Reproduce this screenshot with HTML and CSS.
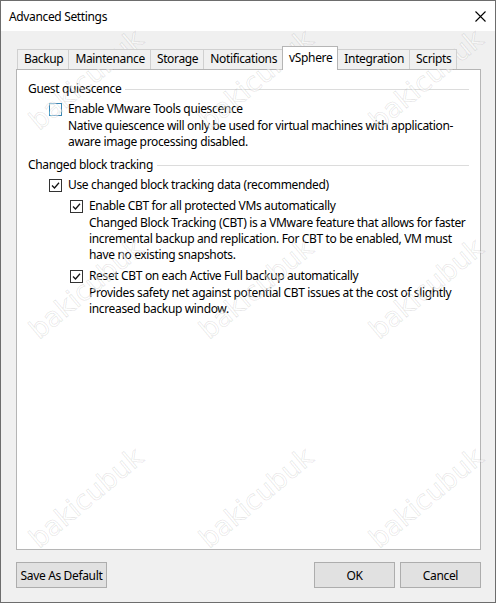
FILE: index.html
```html
<!DOCTYPE html>
<html lang="en">
<head>
  <meta charset="UTF-8" />
  <title>Advanced Settings</title>
  <link rel="stylesheet" href="styles.css">
</head>
<body>

  <div class="window">
    <!-- Title bar -->
    <div class="titlebar">
      <span class="title">Advanced Settings</span>
      <svg class="close" width="11" height="11" viewBox="0 0 11 11">
        <path d="M0.5 0.5L10.5 10.5M10.5 0.5L0.5 10.5" stroke="#000" stroke-width="1.1" fill="none" />
      </svg>
    </div>

    <div class="body">
      <!-- Tabs -->
      <div class="tabs">
        <div class="tab">Backup</div>
        <div class="tab">Maintenance</div>
        <div class="tab">Storage</div>
        <div class="tab">Notifications</div>
        <div class="tab active">vSphere</div>
        <div class="tab">Integration</div>
        <div class="tab">Scripts</div>
      </div>

      <!-- vSphere page -->
      <div class="panel">
        <div class="group">
          <div class="group-title">Guest quiescence</div>
          <div class="option">
            <span class="box box-focus"></span>
            <div>
              <div class="option-label">Enable VMware Tools quiescence</div>
              <div class="option-desc">Native quiescence will only be used for virtual machines with application-<br>aware image processing disabled.</div>
            </div>
          </div>
        </div>

        <div class="group">
          <div class="group-title">Changed block tracking</div>
          <div class="option">
            <span class="box"><svg viewBox="0 0 11 11"><path d="M2 5.5L4.5 8L9 2.8" /></svg></span>
            <div>
              <div class="option-label">Use changed block tracking data (recommended)</div>
            </div>
          </div>
          <div class="nested">
            <div class="option">
              <span class="box"><svg viewBox="0 0 11 11"><path d="M2 5.5L4.5 8L9 2.8" /></svg></span>
              <div>
                <div class="option-label">Enable CBT for all protected VMs automatically</div>
                <div class="option-desc">Changed Block Tracking (CBT) is a VMware feature that allows for faster<br>incremental backup and replication. For CBT to be enabled, VM must<br>have no existing snapshots.</div>
              </div>
            </div>
            <div class="option">
              <span class="box"><svg viewBox="0 0 11 11"><path d="M2 5.5L4.5 8L9 2.8" /></svg></span>
              <div>
                <div class="option-label">Reset CBT on each Active Full backup automatically</div>
                <div class="option-desc">Provides safety net against potential CBT issues at the cost of slightly<br>increased backup window.</div>
              </div>
            </div>
          </div>
        </div>
      </div>

      <!-- Buttons -->
      <div class="footer">
        <button class="btn btn-wide">Save As Default</button>
        <button class="btn">OK</button>
        <button class="btn">Cancel</button>
      </div>
    </div>

    <!-- Watermark -->
    <div class="watermarks" aria-hidden="true">
      <span>bakicubuk</span><span>bakicubuk</span><span>bakicubuk</span>
      <span>bakicubuk</span><span>bakicubuk</span><span>bakicubuk</span>
      <span>bakicubuk</span><span>bakicubuk</span><span>bakicubuk</span>
    </div>
  </div>

</body>
</html>
```

FILE: styles.css
```css
/* Global */
* {
  box-sizing: border-box;
}

body {
  margin: 0;
  font-family: "Noto Sans", "Segoe UI", sans-serif;
  font-size: 12px;
  letter-spacing: -0.35px;
  color: #000;
  background: #f0f0f0;
}

/* Window frame */
.window {
  position: relative;
  width: 496px;
  height: 603px;
  border: 1px solid #6d6d6d;
  background: #f0f0f0;
  display: flex;
  flex-direction: column;
  overflow: hidden;
}

.titlebar {
  height: 30px;
  background: #fff;
  display: flex;
  align-items: center;
  justify-content: space-between;
  padding: 0 9px 0 8px;
}

.body {
  flex: 1;
  display: flex;
  flex-direction: column;
  padding: 15px 14px 14px 15px;
}

/* Tabs */
.tabs {
  display: flex;
  align-items: flex-end;
  height: 23px;
  padding-left: 2px;
  position: relative;
  z-index: 1;
}

.tab {
  height: 20px;
  line-height: 17px;
  padding: 0 5px 0 6px;
  margin-left: -1px;
  border: 1px solid #d0d0d0;
  border-bottom: none;
  background: #f0f0f0;
  white-space: nowrap;
}

.tab.active {
  height: 24px;
  line-height: 21px;
  margin-bottom: -1px;
  background: #fff;
  border-color: #b5b5b5;
  position: relative;
  z-index: 1;
}

/* Tab page */
.panel {
  flex: 1;
  background: #fff;
  border: 1px solid #b5b5b5;
  padding: 11px 11px 0 11px;
  line-height: 16px;
}

.group + .group {
  margin-top: 7px;
}

.group-title {
  display: flex;
  align-items: center;
  white-space: nowrap;
}

.group-title::after {
  content: "";
  flex: 1;
  height: 1px;
  margin-left: 4px;
  background: #dcdcdc;
}

.option {
  display: grid;
  grid-template-columns: 13px 1fr;
  column-gap: 6px;
  margin: 4px 0 0 21px;
  white-space: nowrap;
}

.nested {
  margin-left: 21px;
}

.nested .option {
  margin-top: 5px;
}

.option-desc {
  margin-top: 1px;
}

.box {
  width: 13px;
  height: 13px;
  margin-top: 2px;
  border: 1px solid #333;
  background: #fff;
  display: flex;
}

.box svg {
  width: 11px;
  height: 11px;
  fill: none;
  stroke: #111;
  stroke-width: 1.3;
}

.box-focus {
  border-color: #3a88b5;
}

/* Buttons */
.footer {
  display: flex;
  gap: 5px;
  height: 26px;
  margin-top: 12px;
}

.btn {
  width: 81px;
  height: 26px;
  padding: 0;
  border: 1px solid #adadad;
  background: #e1e1e1;
  font-family: inherit;
  font-size: 12px;
  letter-spacing: inherit;
  color: #000;
}

.btn-wide {
  width: 91px;
  margin-right: auto;
}

/* Watermark overlay */
.watermarks {
  position: absolute;
  top: -26px;
  left: 0;
  display: grid;
  grid-template-columns: repeat(3, 170px);
  grid-template-rows: repeat(3, 209px);
  pointer-events: none;
}

.watermarks span {
  display: flex;
  align-items: center;
  justify-content: center;
  font-family: "DejaVu Sans", sans-serif;
  font-size: 27px;
  letter-spacing: 0;
  color: rgba(255, 255, 255, 0.5);
  -webkit-text-stroke: 1px rgba(0, 0, 0, 0.09);
  transform: rotate(-40deg);
}
```
